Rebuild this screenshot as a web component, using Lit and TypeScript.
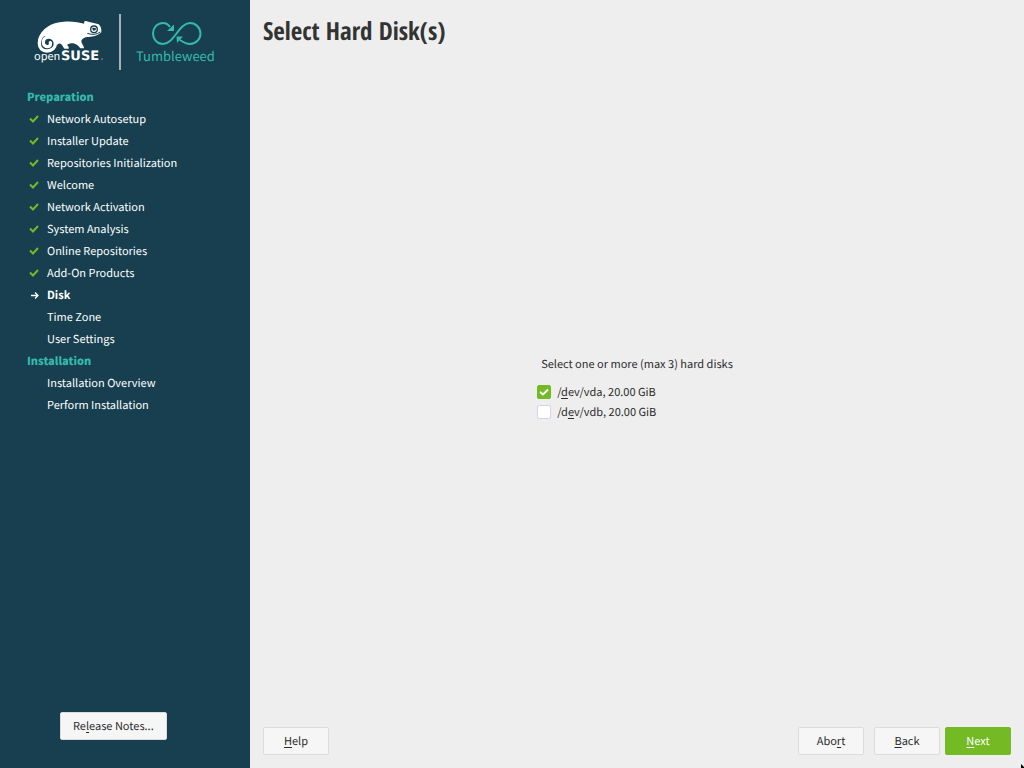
import { LitElement, html, css, svg, nothing } from "lit";
import { customElement, property, state } from "lit/decorators.js";

type StepState = "done" | "current" | "todo";
interface Step { label: string; state: StepState; }
interface Stage { title: string; steps: Step[]; }
interface Mnemonic { before: string; key: string; after: string; }

const done = (label: string): Step => ({ label, state: "done" });
const todo = (label: string): Step => ({ label, state: "todo" });

const STAGES: Stage[] = [
  {
    title: "Preparation",
    steps: [
      done("Network Autosetup"),
      done("Installer Update"),
      done("Repositories Initialization"),
      done("Welcome"),
      done("Network Activation"),
      done("System Analysis"),
      done("Online Repositories"),
      done("Add-On Products"),
      { label: "Disk", state: "current" },
      todo("Time Zone"),
      todo("User Settings"),
    ],
  },
  { title: "Installation", steps: [todo("Installation Overview"), todo("Perform Installation")] },
];

/* "&" marks the accelerator key of a label. */
const parse = (label: string): Mnemonic => {
  const i = label.indexOf("&");
  return { before: label.slice(0, i), key: label[i + 1], after: label.slice(i + 2) };
};
const mnemonic = (label: string) => {
  const m = parse(label);
  return html`${m.before}<span class="key">${m.key}</span>${m.after}`;
};

const keyStyle = css`
  .key {
    text-decoration: underline;
    text-decoration-thickness: 1px;
    text-underline-offset: 2px;
    text-decoration-skip-ink: none;
  }
`;

@customElement("product-logo")
class ProductLogo extends LitElement {
  static styles = css`
    :host { display: block; }
    svg { display: block; width: 100%; }
    .brand { font: 11px "Noto Sans CJK SC", sans-serif; }
    .brand-bold { font: 700 13px "DejaVu Sans", sans-serif; }
    .product { font: 13px "Noto Sans CJK SC", sans-serif; }
  `;
  render() {
    return html`<svg viewBox="0 0 250 86" role="img" aria-label="openSUSE Tumbleweed">
      <g transform="translate(34 18) scale(.33333)">
        <path fill="none" stroke="#fff" stroke-width="10" stroke-linecap="round" d="M34 44C20 54 16 64 16 76C16 91 26 99 39 99C54 99 64 89 64 77C64 65 54 57 44 57C34 57 28 65 28 73C28 81 34 86 41 86C48 86 51 80 49 74"/>
        <path fill="#fff" d="M12 66C20 32 52 13 90 11C116 9 136 14 151 17C149 12 151 8 156 9C168 13 184 15 194 19C200 23 203 34 202 43C193 52 178 57 164 57C152 56 145 62 142 68C142 78 150 82 150 91L139 91C132 82 126 78 118 76C108 76 102 78 99 81C103 83 105 88 104 92L92 92C86 88 87 80 79 77C74 76 71 79 68 83C68 66 58 55 44 54C30 52 21 59 12 66Z"/>
        <circle cx="180" cy="34" r="10" fill="none" stroke="#173f4f" stroke-width="4"/>
        <path d="M174 31Q180 27 187 32Q184 39 178 38Z" fill="#173f4f"/>
        <path d="M160 46Q182 54 199 42" fill="none" stroke="#173f4f" stroke-width="3"/>
      </g>
      <text class="brand" x="34" y="60" fill="#fff">open</text>
      <text class="brand-bold" x="61" y="60" fill="#fff">SUSE</text>
      <circle cx="102" cy="59" r=".6" fill="#fff"/>
      <rect x="119" y="14" width="2" height="56" fill="#a3b2b9"/>
      <path fill="none" stroke="#35b9ab" stroke-width="2" d="M170 27C168 24 166 23 163 23C157 23 153 28 153 33.500C153 39 157 44 163 44C174 44 179 23 190 23C196 23 200.500 28 200.500 33.500C200.500 39 196 44 190 44C186 44 183 42 180 40"/>
      <path fill="#35b9ab" d="M174 24.500V31H167Z M176.500 36.500H183L177 43Z"/>
      <text class="product" x="136" y="61" fill="#35b9ab">Tumbleweed</text>
    </svg>`;
  }
}

@customElement("step-list")
class StepList extends LitElement {
  @property({ attribute: false }) stages: Stage[] = [];
  static styles = css`
    :host { display: block; }
    h2, ol { margin: 0; padding: 0; font-size: 11px; line-height: 22px; }
    h2 { color: #35b9ab; font-weight: 900; }
    ol { list-style: none; }
    li { display: grid; grid-template-columns: 16px 1fr; column-gap: 4px; align-items: center; }
    svg { display: block; width: 16px; height: 16px; }
    .current { font-weight: 700; }
  `;
  private icon(s: StepState) {
    if (s === "done") return svg`<path d="M3 7.500L6 10.500L11 5" fill="none" stroke="#73ba25" stroke-width="2"/>`;
    if (s === "current") return svg`<path d="M4 8.500H10.500M8 5.500L11 8.500L8 11.500" fill="none" stroke="#fff" stroke-width="1.300"/>`;
    return nothing;
  }
  render() {
    return html`${this.stages.map((g) => html`
      <section>
        <h2>${g.title}</h2>
        <ol>${g.steps.map((s) => html`
          <li class=${s.state} aria-current=${s.state === "current" ? "step" : nothing}>
            <svg viewBox="0 0 16 16" aria-hidden="true">${this.icon(s.state)}</svg><span>${s.label}</span>
          </li>`)}</ol>
      </section>`)}`;
  }
}

@customElement("push-button")
class PushButton extends LitElement {
  @property() label = "";
  @property({ type: Boolean }) primary = false;
  static styles = [keyStyle, css`
    :host { display: block; }
    button {
      box-sizing: border-box; min-width: 66px; height: 28px; padding: 0 12px;
      border: 1px solid #dcdcdc; border-radius: 2px; background: #f6f6f6; color: #2b2b2b;
      font: 400 11px/26px "Noto Sans CJK SC", sans-serif; white-space: nowrap;
      text-rendering: geometricPrecision;
    }
    .primary { background: #73ba25; border-color: #73ba25; color: #fff; }
  `];
  render() {
    return html`<button type="button" class=${this.primary ? "primary" : ""}>${mnemonic(this.label)}</button>`;
  }
}

@customElement("disk-option")
class DiskOption extends LitElement {
  @property() label = "";
  @property({ type: Boolean }) checked = false;
  static styles = [keyStyle, css`
    :host { display: block; }
    label { display: flex; align-items: flex-start; gap: 6px; line-height: 18px; }
    .box { display: grid; padding-top: 2px; }
    .box > * { grid-area: 1 / 1; }
    .text { padding-bottom: 2px; }
    input {
      appearance: none; box-sizing: border-box; width: 14px; height: 14px; margin: 0;
      border: 1px solid #d0d7e5; border-radius: 2px; background: #fff;
    }
    input:checked { background: #73ba25; border-color: #73ba25; }
    svg { width: 14px; height: 14px; pointer-events: none; }
  `];
  private toggle(e: Event) { this.checked = (e.target as HTMLInputElement).checked; }
  render() {
    return html`<label>
      <span class="box"><input type="checkbox" .checked=${this.checked} @change=${this.toggle}>
      ${this.checked ? html`<svg viewBox="0 0 14 14" aria-hidden="true"><path d="M3 7L6 9.500L11 4.500" fill="none" stroke="#fff" stroke-width="2"/></svg>` : nothing}</span>
      <span class="text">${mnemonic(this.label)}</span>
    </label>`;
  }
}

@customElement("app-root")
class AppRoot extends LitElement {
  @state() private disks = [
    { label: "/&dev/vda, 20.00 GiB", checked: true },
    { label: "/d&ev/vdb, 20.00 GiB", checked: false },
  ];
  static styles = css`
    :host {
      display: grid; grid-template-columns: 250px 1fr; min-height: 100vh; position: relative;
      background: #eee; color: #2b2b2b; font: 400 11px/20px "Noto Sans CJK SC", sans-serif;
      text-rendering: geometricPrecision;
    }
    aside {
      display: flex; flex-direction: column; background: #173f4f; color: #fff;
      padding-bottom: 28px;
    }
    step-list { padding-left: 27px; }
    .notes { margin: auto auto 0 60px; }
    main { display: flex; flex-direction: column; padding: 13px; }
    h1 { margin: 0; color: #333; font: 700 25px/36px "Open Sans Condensed", "Open Sans", sans-serif; }
    .body { flex: 1; display: grid; place-content: center; }
    fieldset { border: 0; margin: 0; padding: 0; min-width: 0; }
    legend { padding: 0 4px; margin-bottom: 9px; }
    footer { display: flex; gap: 5px; }
    .spacer { flex: 1; }
    .back { margin-left: 5px; }
    .pointer { position: absolute; right: 0; bottom: 0; width: 3px; height: 4px; }
  `;
  render() {
    return html`
      <aside>
        <product-logo></product-logo>
        <nav aria-label="Installation steps"><step-list .stages=${STAGES}></step-list></nav>
        <push-button class="notes" label="Re&amp;lease Notes..."></push-button>
      </aside>
      <main>
        <h1>Select Hard Disk(s)</h1>
        <div class="body">
          <fieldset>
            <legend>Select one or more (max 3) hard disks</legend>
            ${this.disks.map((d) => html`<disk-option .label=${d.label} .checked=${d.checked}></disk-option>`)}
          </fieldset>
        </div>
        <footer>
          <push-button label="&amp;Help"></push-button>
          <span class="spacer"></span>
          <push-button label="Abo&amp;rt"></push-button>
          <push-button class="back" label="&amp;Back"></push-button>
          <push-button label="&amp;Next" primary></push-button>
        </footer>
      </main>
      <svg class="pointer" viewBox="0 0 3 4" aria-hidden="true"><path d="M0 0L3 3V4H0Z"/></svg>`;
  }
}
